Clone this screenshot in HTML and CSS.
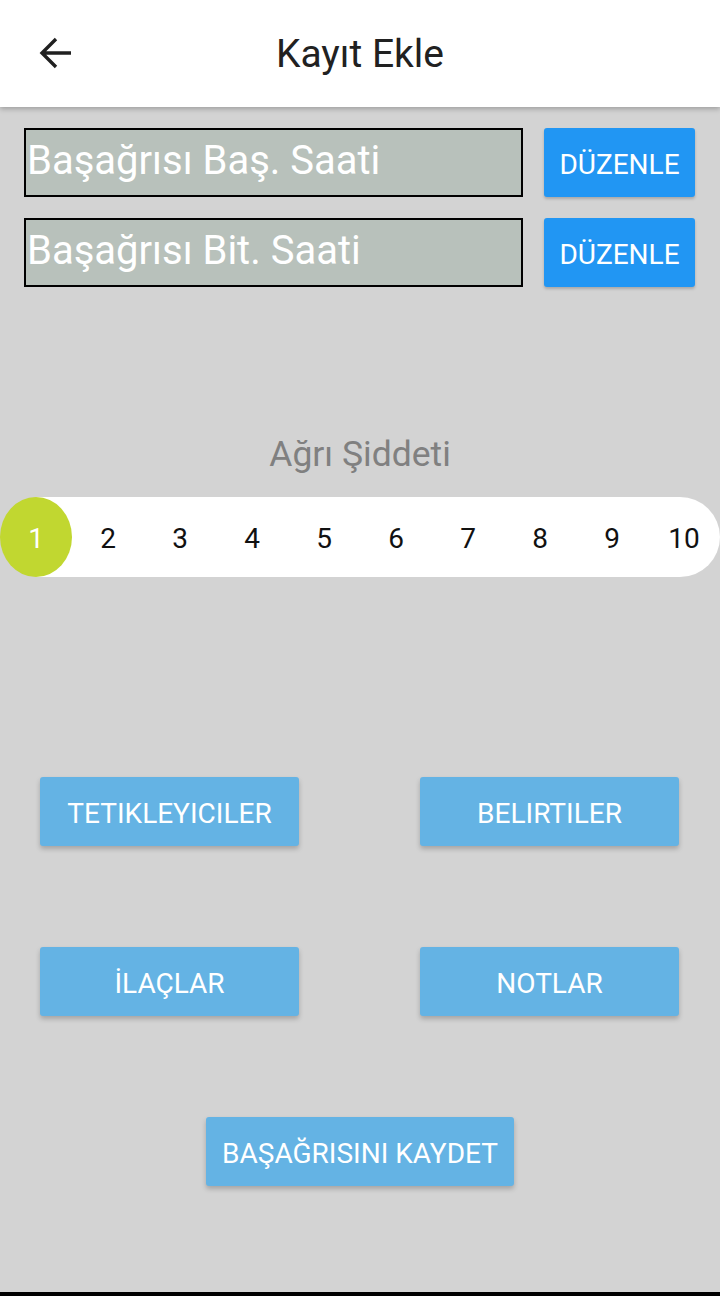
FILE: index.html
```html
<!DOCTYPE html>
<html lang="tr">
<head>
<meta charset="utf-8">
<link rel="stylesheet" href="styles.css">
</head>
<body>
<div class="screen">
  <header class="appbar">
    <svg class="back" width="34" height="32" viewBox="0 0 34 32">
      <path d="M32 16H4M17 2L3 16l14 14" fill="none" stroke="#202020" stroke-width="3.4" stroke-linejoin="miter"/>
    </svg>
    <h1 class="title">Kayıt Ekle</h1>
  </header>
  <main class="content">
    <div class="field-row">
      <div class="field">Başağrısı Baş. Saati</div>
      <button class="edit">DÜZENLE</button>
    </div>
    <div class="field-row">
      <div class="field">Başağrısı Bit. Saati</div>
      <button class="edit">DÜZENLE</button>
    </div>
    <div class="severity-label">Ağrı Şiddeti</div>
    <div class="scale">
      <span class="step active">1</span>
      <span class="step">2</span>
      <span class="step">3</span>
      <span class="step">4</span>
      <span class="step">5</span>
      <span class="step">6</span>
      <span class="step">7</span>
      <span class="step">8</span>
      <span class="step">9</span>
      <span class="step">10</span>
    </div>
    <div class="grid">
      <button class="action">TETIKLEYICILER</button>
      <button class="action">BELIRTILER</button>
      <button class="action">İLAÇLAR</button>
      <button class="action">NOTLAR</button>
    </div>
    <div class="save-wrap">
      <button class="action save">BAŞAĞRISINI KAYDET</button>
    </div>
  </main>
  <div class="navbar"></div>
</div>
</body>
</html>
```
FILE: styles.css
```css
* { box-sizing: border-box; }
html, body { margin: 0; padding: 0; }
body {
  width: 720px;
  height: 1296px;
  background: #d3d3d3;
  font-family: Roboto, "Noto Sans", sans-serif;
  overflow: hidden;
}
.screen {
  width: 720px;
  height: 1296px;
  display: flex;
  flex-direction: column;
}
.appbar {
  position: relative;
  height: 107px;
  background: #ffffff;
  box-shadow: 0 2px 5px rgba(0,0,0,0.25);
  display: flex;
  align-items: center;
  justify-content: center;
  z-index: 2;
}
.back {
  position: absolute;
  left: 39px;
  top: 37px;
}
.title {
  margin: 0;
  font-weight: 400;
  font-size: 39px;
  color: #212121;
  line-height: 1;
  padding-top: 1px;
  white-space: nowrap;
}
.content {
  flex: 1;
  display: flex;
  flex-direction: column;
  padding-top: 21px;
}
.field-row {
  display: flex;
  gap: 21px;
  padding: 0 25px 0 24px;
  margin-bottom: 21px;
  height: 69px;
}
.field {
  width: 499px;
  height: 69px;
  border: 2px solid #000;
  background: #b8c1bb;
  color: #fff;
  font-size: 40px;
  line-height: 1;
  padding: 11px 0 0 1px;
  white-space: nowrap;
}
.edit {
  width: 151px;
  height: 69px;
  border: none;
  border-radius: 3px;
  background: #2196f3;
  color: #fff;
  font-family: inherit;
  font-size: 28px;
  padding: 3px 0 0;
  box-shadow: 0 2px 3px rgba(0,0,0,0.2);
  white-space: nowrap;
}
.severity-label {
  margin-top: 126px;
  text-align: center;
  color: #808080;
  font-size: 35.5px;
  line-height: 40px;
  height: 40px;
}
.scale {
  margin-top: 23px;
  height: 80px;
  display: flex;
  background: linear-gradient(to right, transparent 36px, #fff 36px);
  border-radius: 0 40px 40px 0;
}
.step {
  width: 72px;
  height: 80px;
  display: flex;
  align-items: center;
  justify-content: center;
  font-size: 28px;
  color: #111;
  padding-top: 2px;
}
.step.active {
  background: #c1d730;
  color: #fff;
  border-radius: 50%;
}
.grid {
  margin-top: 200px;
  display: grid;
  grid-template-columns: 259px 259px;
  column-gap: 121px;
  row-gap: 101px;
  padding-left: 40px;
}
.action {
  height: 69px;
  border: none;
  border-radius: 3px;
  background: #64b3e4;
  color: #fff;
  font-family: inherit;
  font-size: 28px;
  padding: 3px 0 0;
  box-shadow: 0 3px 5px rgba(0,0,0,0.22);
  white-space: nowrap;
}
.save-wrap {
  margin-top: 101px;
  display: flex;
  justify-content: center;
}
.save {
  width: 308px;
}
.navbar {
  height: 4px;
  background: #000;
}
```
